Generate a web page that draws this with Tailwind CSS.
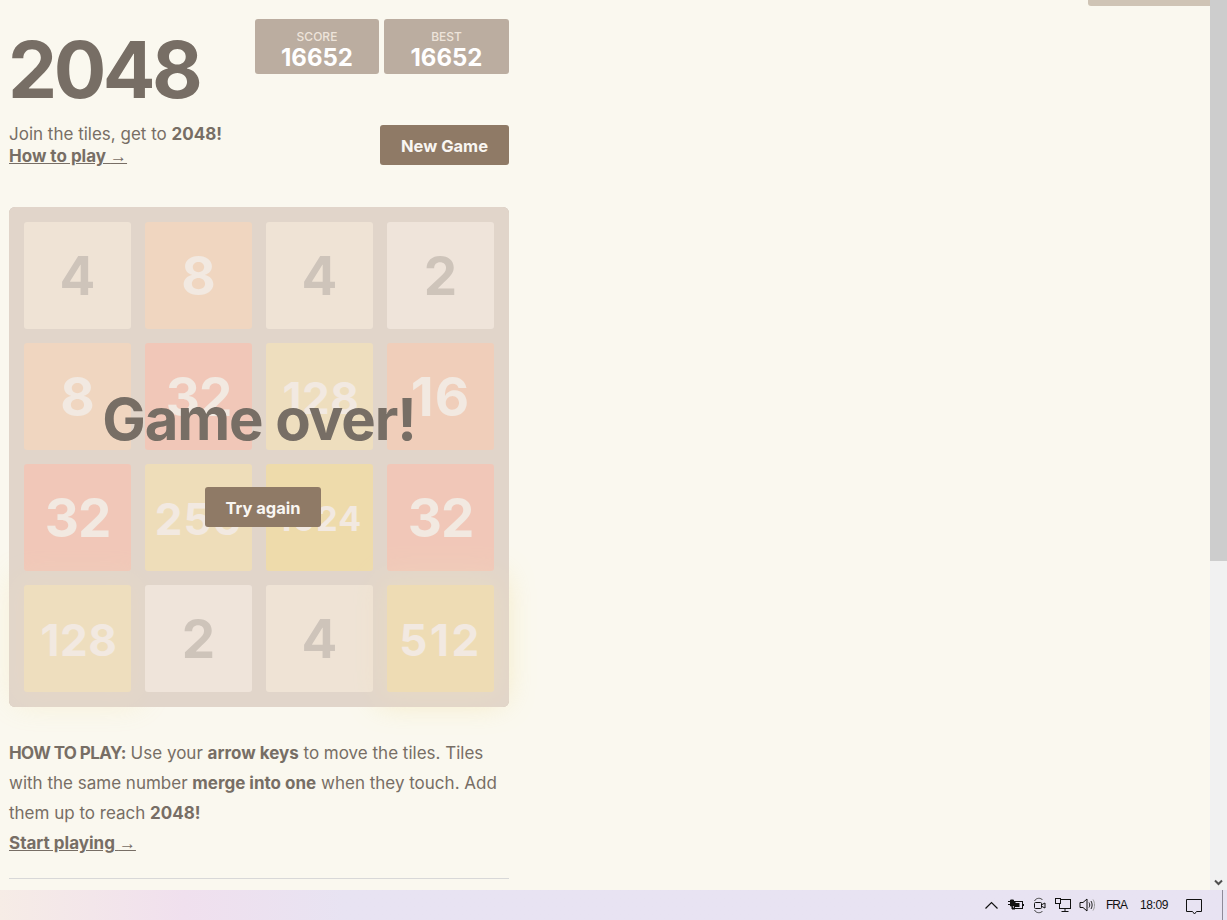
<!DOCTYPE html>
<html lang="en">
<head>
    <meta charset="UTF-8">
    <title>2048</title>
    <script src="https://cdn.jsdelivr.net/npm/@tailwindcss/browser@4"></script>
</head>
<body class="bg-[#faf8ef] h-[920px] w-[1227px] overflow-hidden relative font-['Inter',sans-serif] text-[#776e65] text-[17px]">

    <!-- top right tab -->
    <div class="absolute top-0 left-[1088px] w-[122px] h-[6px] bg-[#cfc4b5] rounded-bl-[3px]"></div>

    <!-- page -->
    <div class="w-[500px] ml-[9px] h-[890px]">
        <!-- heading -->
        <div class="flex justify-between h-[100px] pt-[19px]">
            <h1 class="text-[78px] tracking-[-3.500px] -ml-[1px] font-bold leading-none mt-[12px] h-[81px]">2048</h1>
            <div class="flex gap-[5px] h-[55px]">
                <div class="w-[124px] bg-[#bbada0] rounded-[3px] flex flex-col items-center pt-[9px]">
                    <span class="text-[12px] leading-[17px] font-medium text-[#eee4da]">SCORE</span>
                    <span class="text-[24px] leading-[25px] font-bold text-white">16652</span>
                </div>
                <div class="w-[125px] bg-[#bbada0] rounded-[3px] flex flex-col items-center pt-[9px]">
                    <span class="text-[12px] leading-[17px] font-medium text-[#eee4da]">BEST</span>
                    <span class="text-[24px] leading-[25px] font-bold text-white">16652</span>
                </div>
            </div>
        </div>

        <!-- intro -->
        <div class="flex justify-between mt-[23px] h-[44px]">
            <p class="leading-[22px] text-[17px]">Join the tiles, get to <strong>2048!</strong><br>
                <a href="#" class="font-bold underline">How to play <span class="font-normal font-['Liberation_Sans',sans-serif]">→</span></a></p>
            <a href="#" class="w-[129px] h-[40px] mt-[2px] bg-[#8f7a66] rounded-[3px] text-[#f9f6f2] font-bold text-[16.5px] leading-[43px] text-center">New Game</a>
        </div>

        <!-- board -->
        <div class="relative w-[500px] h-[500px] mt-[40px] bg-[#bbada0] rounded-[6px] p-[15px]">
            <div class="grid grid-cols-[107px_107px_107px_107px] grid-rows-[107px_107px_107px_107px] gap-x-[14px] gap-y-[14px] font-bold text-[53px]">
                <div class="rounded-[3px] flex items-center justify-center pt-[2px] bg-[#eee1c9]">4</div>
                <div class="rounded-[3px] flex items-center justify-center pt-[2px] bg-[#f2b179] text-[#f9f6f2]">8</div>
                <div class="rounded-[3px] flex items-center justify-center pt-[2px] bg-[#eee1c9]">4</div>
                <div class="rounded-[3px] flex items-center justify-center pt-[2px] bg-[#eee4da]">2</div>

                <div class="rounded-[3px] flex items-center justify-center pt-[2px] bg-[#f2b179] text-[#f9f6f2]">8</div>
                <div class="rounded-[3px] flex items-center justify-center pt-[2px] bg-[#f67c5f] text-[#f9f6f2] tracking-[-1px]">32</div>
                <div class="rounded-[3px] flex items-center justify-center pt-[2px] pl-[3px] bg-[#edcf72] text-[#f9f6f2] text-[44px] tracking-[0.500px]">128</div>
                <div class="rounded-[3px] flex items-center justify-center pt-[2px] bg-[#f59563] text-[#f9f6f2] tracking-[1px]">16</div>

                <div class="rounded-[3px] flex items-center justify-center pt-[2px] bg-[#f67c5f] text-[#f9f6f2] tracking-[-1px]">32</div>
                <div class="rounded-[3px] flex items-center justify-center pt-[2px] bg-[#edcc61] text-[#f9f6f2] text-[44px] tracking-[1px]">256</div>
                <div class="rounded-[3px] flex items-center justify-center pt-[2px] bg-[#edc22e] text-[#f9f6f2] text-[34px] tracking-[1px]">1024</div>
                <div class="rounded-[3px] flex items-center justify-center pt-[2px] bg-[#f67c5f] text-[#f9f6f2] tracking-[-1px]">32</div>

                <div class="rounded-[3px] flex items-center justify-center pt-[2px] pl-[3px] bg-[#edcf72] text-[#f9f6f2] text-[44px] tracking-[0.500px] shadow-[0_0_30px_10px_rgba(243,215,116,0.24)]">128</div>
                <div class="rounded-[3px] flex items-center justify-center pt-[2px] bg-[#eee4da]">2</div>
                <div class="rounded-[3px] flex items-center justify-center pt-[2px] bg-[#eee1c9]">4</div>
                <div class="rounded-[3px] flex items-center justify-center pt-[2px] bg-[#edc850] text-[#f9f6f2] text-[44px] tracking-[2.500px] shadow-[0_0_30px_10px_rgba(243,215,116,0.4)]">512</div>
            </div>

            <!-- game over overlay -->
            <div class="absolute inset-0 rounded-[6px] bg-[#eee4da]/73 flex flex-col items-center pt-[176px]">
                <p class="text-[58px] tracking-[-1.100px] font-bold leading-[72px] text-[#776e65]">Game over!</p>
                <a href="#" class="w-[116px] h-[40px] mt-[32px] ml-[8px] bg-[#8f7a66] rounded-[3px] text-[#f9f6f2] font-bold text-[16.5px] leading-[43px] text-center">Try again</a>
            </div>
        </div>

        <!-- explanation -->
        <p class="mt-[31px] leading-[30px] text-[17px]"><strong class="tracking-[-0.600px]">HOW TO PLAY:</strong> Use your <strong>arrow keys</strong> to move the tiles. Tiles with the same number <strong>merge into one</strong> when they touch. Add them up to reach <strong>2048!</strong><br>
            <a href="#" class="font-bold underline">Start playing <span class="font-normal font-['Liberation_Sans',sans-serif]">→</span></a></p>
        <hr class="mt-[19px] border-t border-[#d8d8d8]">
    </div>

    <!-- scrollbar -->
    <div class="absolute top-0 left-[1210px] w-[17px] h-[890px] bg-[#f1f1f1] flex flex-col justify-between">
        <div class="h-[561px] bg-[#cdcdcd]"></div>
        <svg class="mb-[4px] ml-[4px]" width="9" height="7" viewBox="0 0 9 7"><path d="M1 1.500 4.500 5 8 1.500" fill="none" stroke="#505050" stroke-width="2"/></svg>
    </div>

    <!-- taskbar -->
    <div class="absolute left-0 top-[890px] w-[1227px] h-[30px] bg-linear-to-r from-[#f6ece6] via-[#f0e0ee] via-[15%] to-[#e8e3f2] to-[28%] flex items-center justify-end text-[#111] font-['Liberation_Sans',sans-serif] text-[12px]">
        <svg class="mr-[9px]" width="13" height="8" viewBox="0 0 13 8"><path d="M.5 7.500 6.500 1.500l6 6" fill="none" stroke="#111" stroke-width="1.200"/></svg>
        <svg class="mr-[9px]" width="17" height="12" viewBox="0 0 17 12"><path d="M1 2.500h3M1 5.500h3M7 4h2" fill="none" stroke="#111"/><path d="M3.500 1h3v6h-3zM5 7v3h3" fill="#111" stroke="#111"/><rect x="7.500" y="2.500" width="8" height="7" fill="none" stroke="#111"/><rect x="8" y="4" width="4.500" height="4" fill="#111"/><path d="M16.500 5v2" stroke="#111"/></svg>
        <svg class="mr-[9px]" width="13" height="17" viewBox="0 0 13 17"><path d="M1.500 4C3 .6 8 .6 9.500 3M1.500 13c1.500 3.400 6.500 3.400 8 1" fill="none" stroke="#444"/><rect x="1.500" y="5.500" width="7" height="6" rx="1" fill="none" stroke="#111"/><path d="M9 7.500 12 6v5L9 9.500" fill="none" stroke="#111"/></svg>
        <svg class="mr-[8px]" width="16" height="15" viewBox="0 0 16 15"><rect x="4.500" y="1.500" width="11" height="9" fill="none" stroke="#111"/><rect x=".5" y=".5" width="5" height="5" fill="#e9e3f2" stroke="#111"/><path d="M10 10.500v3M6.500 13.500h7" fill="none" stroke="#111"/></svg>
        <svg class="mr-[11px]" width="16" height="14" viewBox="0 0 16 14"><path d="M1 4.500h3L8 1v12L4 9.500H1z" fill="none" stroke="#111"/><path d="M10 4.500c1 1.500 1 3.500 0 5M12 3c1.500 2.500 1.500 5.500 0 8" fill="none" stroke="#222"/><path d="M14 1.500c2 3 2 8 0 11" fill="none" stroke="#999"/></svg>
        <span class="mr-[13px] leading-none tracking-[-1px]">FRA</span>
        <span class="mr-[18px] leading-none tracking-[-0.4px]">18:09</span>
        <svg class="mr-[24px] mt-[2px]" width="17" height="17" viewBox="0 0 17 17"><path d="M.5 1.500h15v12h-5l-2 2.500-2-2.500h-6z" fill="none" stroke="#111"/></svg>
        <div class="absolute right-[4px] top-0 h-[30px] w-px bg-[#8f8b99]"></div>
    </div>
</body>
</html>
